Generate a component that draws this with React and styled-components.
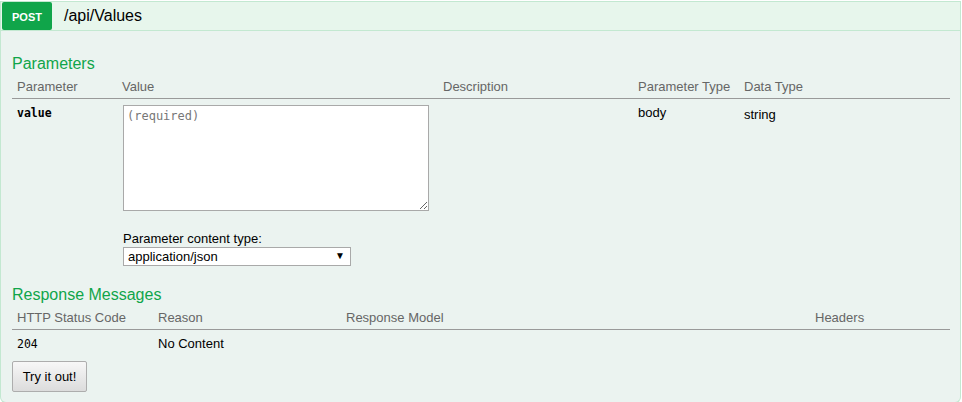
import React from 'react';
import styled, { createGlobalStyle } from 'styled-components';

const GlobalStyle = createGlobalStyle`
    body {
        margin: 0;
        background: #fff;
        font-family: "Liberation Sans", Arial, sans-serif;
        font-size: 13px;
        color: #000;
    }
`;

const Page = styled.div`
    padding: 1px 1px 0 0;
`;

const Operation = styled.div`
    display: flex;
    flex-direction: column;
`;

const Heading = styled.div`
    display: flex;
    align-items: stretch;
    height: 28px;
    background: #e7f6ec;
    border: 1px solid #c3e8d1;
`;

const Method = styled.span`
    display: flex;
    align-items: center;
    justify-content: center;
    width: 50px;
    margin-left: 1px;
    padding-top: 2px;
    box-sizing: border-box;
    background: #10a54a;
    border-radius: 2px;
    color: #fff;
    font-size: 11px;
    font-weight: bold;
    text-transform: uppercase;
`;

const Path = styled.span`
    display: flex;
    align-items: center;
    padding-left: 12px;
    font-size: 16px;
    color: #000;
`;

const Content = styled.div`
    background: #ebf3f0;
    border: 1px solid #c3e8d1;
    border-top: none;
    border-radius: 0 0 6px 6px;
    padding: 0 10px 10px 11px;
`;

const SectionTitle = styled.h4`
    margin: ${p => p.$top}px 0 1px;
    font-size: 16px;
    line-height: 18px;
    font-weight: normal;
    color: #10a54a;
`;

const Grid = styled.div`
    display: grid;
    grid-template-columns: ${p => p.$cols};
`;

const Th = styled.div`
    padding: 5px 5px 4px;
    line-height: 15px;
    color: #666;
    border-bottom: 1px solid #999;
`;

const Td = styled.div`
    padding: ${p => p.$top || 6}px 5px 0;
    line-height: 15px;
    color: #000;
`;

const Code = styled.code`
    font-family: "DejaVu Sans Mono", Consolas, monospace;
    font-size: 11.5px;
    font-weight: ${p => (p.$bold ? 'bold' : 'normal')};
`;

const ValueCell = styled.div`
    display: flex;
    flex-direction: column;
    align-items: flex-start;
    padding: 6px 5px 0 6px;
`;

const BodyInput = styled.textarea`
    width: 306px;
    height: 106px;
    box-sizing: border-box;
    margin: 0;
    padding: 3px;
    border: 1px solid #a9a9a9;
    background: #fff;
    font-family: "DejaVu Sans Mono", Consolas, monospace;
    font-size: 12px;
    line-height: 14px;

    &::placeholder {
        color: #777;
    }
`;

const Label = styled.label`
    margin-top: 20px;
    line-height: 15px;
`;

const SelectWrap = styled.div`
    position: relative;
    width: 228px;
    height: 19px;
    margin-top: 1px;
`;

const Select = styled.select`
    appearance: none;
    width: 100%;
    height: 100%;
    box-sizing: border-box;
    margin: 0;
    padding: 0 0 0 4px;
    border: 1px solid #a9a9a9;
    border-radius: 0;
    background: #fff;
    font-family: "Liberation Sans", Arial, sans-serif;
    font-size: 13px;
    color: #000;
`;

const Arrow = styled.span`
    position: absolute;
    right: 6px;
    top: 4px;
    font-size: 10px;
    line-height: 10px;
    pointer-events: none;
`;

const Button = styled.button`
    margin-top: 9px;
    width: 75px;
    height: 31px;
    padding: 0;
    border: 1px solid #adadad;
    border-radius: 2px;
    background: linear-gradient(#f7f7f7, #dcdcdc);
    font-family: "Liberation Sans", Arial, sans-serif;
    font-size: 13px;
    color: #000;
`;

const App = () => (
    <Page>
        <GlobalStyle />
        <Operation>
            <Heading>
                <Method>post</Method>
                <Path>/api/Values</Path>
            </Heading>
            <Content>
                <SectionTitle $top={24}>Parameters</SectionTitle>
                <Grid $cols="105px 321px 195px 106px 1fr">
                    <Th>Parameter</Th>
                    <Th>Value</Th>
                    <Th>Description</Th>
                    <Th>Parameter Type</Th>
                    <Th>Data Type</Th>
                    <Td><Code $bold>value</Code></Td>
                    <ValueCell>
                        <BodyInput placeholder="(required)" />
                        <Label>Parameter content type:</Label>
                        <SelectWrap>
                            <Select defaultValue="application/json">
                                <option>application/json</option>
                                <option>text/json</option>
                            </Select>
                            <Arrow>▼</Arrow>
                        </SelectWrap>
                    </ValueCell>
                    <Td />
                    <Td>body</Td>
                    <Td $top={8}>string</Td>
                </Grid>
                <SectionTitle $top={20}>Response Messages</SectionTitle>
                <Grid $cols="141px 188px 469px 1fr">
                    <Th>HTTP Status Code</Th>
                    <Th>Reason</Th>
                    <Th>Response Model</Th>
                    <Th>Headers</Th>
                    <Td><Code>204</Code></Td>
                    <Td>No Content</Td>
                    <Td />
                    <Td />
                </Grid>
                <Button>Try it out!</Button>
            </Content>
        </Operation>
    </Page>
);

export default App;
